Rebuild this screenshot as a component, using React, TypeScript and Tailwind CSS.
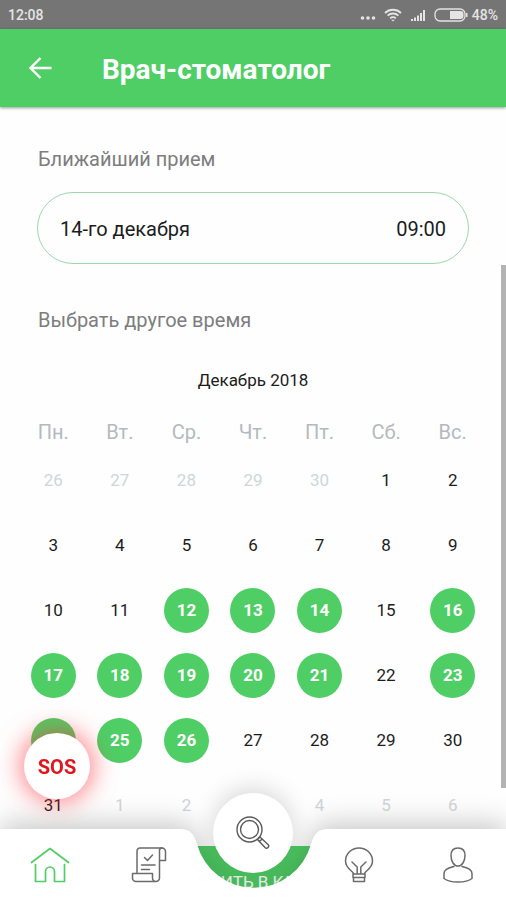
import React from "react";

const weekdays = ["Пн.", "Вт.", "Ср.", "Чт.", "Пт.", "Сб.", "Вс."];

type Kind = "muted" | "plain" | "open";
type Day = { label: number; kind: Kind };

const openDays = [12, 13, 14, 16, 17, 18, 19, 20, 21, 23, 24, 25, 26];

const days: Day[] = [
  ...[26, 27, 28, 29, 30].map((label): Day => ({ label, kind: "muted" })),
  ...Array.from({ length: 31 }, (_, i): Day => ({
    label: i + 1,
    kind: openDays.includes(i + 1) ? "open" : "plain",
  })),
  ...[1, 2, 3, 4, 5, 6].map((label): Day => ({ label, kind: "muted" })),
];

const weeks = Array.from({ length: 6 }, (_, i) => days.slice(i * 7, i * 7 + 7));

const dayStyles: Record<Kind, string> = {
  muted: "text-[#d0d5d9]",
  plain: "text-[#1c1c1c]",
  open: "bg-[#4fce65] font-bold text-white",
};

function StatusBar() {
  return (
    <div className="flex h-[29px] shrink-0 items-center justify-between bg-[#757575] px-2 pt-px text-[14px] font-medium text-[#e4e4e4]">
      <span>12:08</span>
      <div className="flex items-center gap-2">
        <svg width="16" height="16" viewBox="0 0 16 16" fill="currentColor" aria-hidden="true">
          <circle cx="2.5" cy="11" r="1.8" />
          <circle cx="8" cy="11" r="1.8" />
          <circle cx="13.5" cy="11" r="1.8" />
        </svg>
        <svg width="18" height="14" viewBox="0 0 18 14" fill="none" stroke="currentColor" strokeWidth="1.8" aria-hidden="true">
          <path d="M1 5a11.5 11.5 0 0 1 16 0M3.6 7.7a7.7 7.7 0 0 1 10.8 0M6.2 10.3a4 4 0 0 1 5.6 0" />
          <path d="M9 13.5l-1.8-1.8h3.6z" fill="currentColor" stroke="none" />
        </svg>
        <svg width="16" height="14" viewBox="0 0 16 14" fill="currentColor" aria-hidden="true">
          <path d="M1 11h2v2H1zM4 9.5h2V13H4zM7 7.5h2V13H7zM10 5h2v8h-2zM13 2h2v11h-2z" />
        </svg>
        <div className="flex items-center gap-1">
          <svg width="34" height="14" viewBox="0 0 34 14" aria-hidden="true">
            <rect x="1" y="1" width="30" height="12" rx="5" fill="none" stroke="currentColor" strokeWidth="1.3" />
            <path d="M16 3h10.5a3 3 0 0 1 3 3v2a3 3 0 0 1-3 3H16zM32 5h1.5v4H32z" fill="currentColor" />
          </svg>
          <span>48%</span>
        </div>
      </div>
    </div>
  );
}

function HomeIcon() {
  return (
    <svg width="40" height="36" viewBox="0 0 40 36" fill="none" stroke="#4fce65" strokeWidth="1.7" strokeLinecap="round" strokeLinejoin="round" aria-hidden="true">
      <path d="M1.5 15.5L20 1.5l18.5 14" />
      <path d="M5.5 17.5V34.5H15.5V24.5a4.500 4.500 0 0 1 9 0V34.5H34.5V17.5" />
    </svg>
  );
}

function ScrollIcon() {
  return (
    <svg width="36" height="36" viewBox="0 0 36 36" fill="none" stroke="#6b6b6b" strokeWidth="1.5" strokeLinecap="round" strokeLinejoin="round" aria-hidden="true">
      <path d="M6 26V4a3 3 0 0 1 3-3h22a3.5 3.5 0 0 1 3.5 3.5V13.5H29" />
      <path d="M31 1a2.5 2.5 0 0 0-2.5 2.5V31a3.5 3.5 0 0 1-3.5 3.5H5A3.5 3.5 0 0 1 1.5 31V26.5H21.5V31a3.5 3.5 0 0 0 3.5 3.5" />
      <path d="M13.5 10.5l3 3 5-5.500M10.5 18H24M10.5 22.5h8" />
    </svg>
  );
}

function BulbIcon() {
  return (
    <svg width="30" height="36" viewBox="0 0 30 36" fill="none" stroke="#6b6b6b" strokeWidth="1.5" strokeLinecap="round" strokeLinejoin="round" aria-hidden="true">
      <path d="M9.5 26.5C9 24 1.5 21.5 1.5 14A13.5 13 0 0 1 28.5 14C28.5 21.5 21 24 20.5 26.5" />
      <path d="M9 27h12v3.5H9zM9.5 30.5h11v4h-11z" />
      <path d="M13.2 26.5V20L8 15M16.8 26.5V20L22 15" />
    </svg>
  );
}

function PersonIcon() {
  return (
    <svg width="30" height="36" viewBox="0 0 30 36" fill="none" stroke="#6b6b6b" strokeWidth="1.5" strokeLinecap="round" strokeLinejoin="round" aria-hidden="true">
      <path d="M15 1C10.5 1 8 4 8 8.5C8 14.5 11 19 15 19S22 14.5 22 8.5C22 4 19.5 1 15 1z" />
      <path d="M11 19.5C6.5 20.5 1 22.5 1 26.5V31.5C3.5 33.5 9 35 15 35S26.5 33.5 29 31.5V26.5C29 22.5 23.5 20.5 19 19.5" />
    </svg>
  );
}

function SearchIcon() {
  return (
    <svg width="34" height="34" viewBox="0 0 34 34" fill="none" stroke="#5a5a5a" strokeWidth="1.4" strokeLinejoin="round" aria-hidden="true">
      <circle cx="13.5" cy="13.5" r="12.5" />
      <circle cx="13.5" cy="13.5" r="9" />
      <path d="M21.5 23.5l2.5-2.5 8 7.5a1.8 1.8 0 0 1-3 3zM23.5 25.5l2.3-2.3" />
    </svg>
  );
}

function NavLink({ label, children }: { label: string; children: React.ReactNode }) {
  return (
    <a href="#" aria-label={label} className="flex h-9 w-10 items-center justify-center">
      {children}
    </a>
  );
}

function BottomNav() {
  return (
    <nav className="fixed inset-x-0 bottom-0">
      <div className="flex h-[71px] drop-shadow-[0_-5px_14px_rgba(0,0,0,0.22)]">
        <div className="flex flex-1 items-center justify-between bg-white pr-3 pl-[30px]">
          <NavLink label="Главная"><HomeIcon /></NavLink>
          <NavLink label="Записи"><ScrollIcon /></NavLink>
        </div>
        <svg width="148" height="71" viewBox="0 0 148 71" fill="#fff" className="-mx-px shrink-0" aria-hidden="true">
          <path d="M0 0C10 0 14 5 17 15A59 59 0 0 0 131 15C134 5 138 0 148 0V71H0z" />
        </svg>
        <div className="flex flex-1 items-center justify-between bg-white pr-7 pl-3">
          <NavLink label="Советы"><BulbIcon /></NavLink>
          <NavLink label="Профиль"><PersonIcon /></NavLink>
        </div>
      </div>
      <button
        type="button"
        aria-label="Поиск"
        className="absolute inset-x-0 bottom-[27px] mx-auto flex size-20 items-center justify-center rounded-full bg-white shadow-[0_-4px_24px_rgba(0,0,0,0.16)]"
      >
        <SearchIcon />
      </button>
    </nav>
  );
}

export default function App() {
  return (
    <div className="relative flex h-screen flex-col overflow-hidden bg-[#fefefe] font-[Roboto,sans-serif]">
      <StatusBar />
      <header className="z-10 flex h-[78px] shrink-0 items-center gap-[50px] bg-[#4fce65] px-7 pt-1 text-white shadow-[0_1px_3px_rgba(0,0,0,0.4)]">
        <button type="button" aria-label="Назад" className="-mt-1">
          <svg width="24" height="24" viewBox="0 0 24 24" fill="none" stroke="currentColor" strokeWidth="2.4" aria-hidden="true">
            <path d="M23.5 12H3M12.5 2L2.5 12l10 10" />
          </svg>
        </button>
        <h1 className="text-[28px] leading-8 font-bold">Врач-стоматолог</h1>
      </header>

      <main className="relative flex min-h-0 flex-1 flex-col overflow-hidden pt-10">
        <h2 className="px-[38px] text-[20px] leading-6 text-[#7d7d7d]">Ближайший прием</h2>
        <button
          type="button"
          className="mx-[37px] mt-[21px] flex h-[72px] shrink-0 items-center justify-between rounded-full border border-[#9ad8ae] px-[22px] pt-px text-xl text-[#1c1c1c]"
        >
          <span>14-го декабря</span>
          <span>09:00</span>
        </button>
        <h2 className="mt-11 px-[38px] text-[20px] leading-6 text-[#7d7d7d]">Выбрать другое время</h2>

        <table className="mx-5 mt-9 table-fixed border-collapse text-center">
          <caption className="mb-6 text-[17px] leading-6 text-[#1c1c1c]">Декабрь 2018</caption>
          <thead>
            <tr className="h-8">
              {weekdays.map((name) => (
                <th key={name} scope="col" className="p-0 text-[20px] font-normal text-[#b3babe]">
                  {name}
                </th>
              ))}
            </tr>
          </thead>
          <tbody>
            {weeks.map((week, w) => (
              <tr key={w} className="h-[65px]">
                {week.map((day, d) => (
                  <td key={d} className="p-0">
                    <button
                      type="button"
                      className={`inline-flex size-[45px] items-center justify-center rounded-full align-middle text-[17px] ${dayStyles[day.kind]}`}
                    >
                      {day.label}
                    </button>
                  </td>
                ))}
              </tr>
            ))}
          </tbody>
        </table>

        <button type="button" className="mt-2 h-[74px] shrink-0 bg-[#4fce65] text-[17px] text-white uppercase">
          Позвонить в клинику
        </button>
        <div className="absolute top-[158px] right-0 h-[523px] w-[5px] bg-[#b3b3b3]" />
      </main>

      <BottomNav />
      <button
        type="button"
        className="fixed bottom-[101px] left-6 size-[66px] rounded-full bg-white pt-0.5 text-xl font-bold text-[#e0161c] shadow-[0_0_22px_5px_rgba(255,40,50,0.5)]"
      >
        SOS
      </button>
    </div>
  );
}
